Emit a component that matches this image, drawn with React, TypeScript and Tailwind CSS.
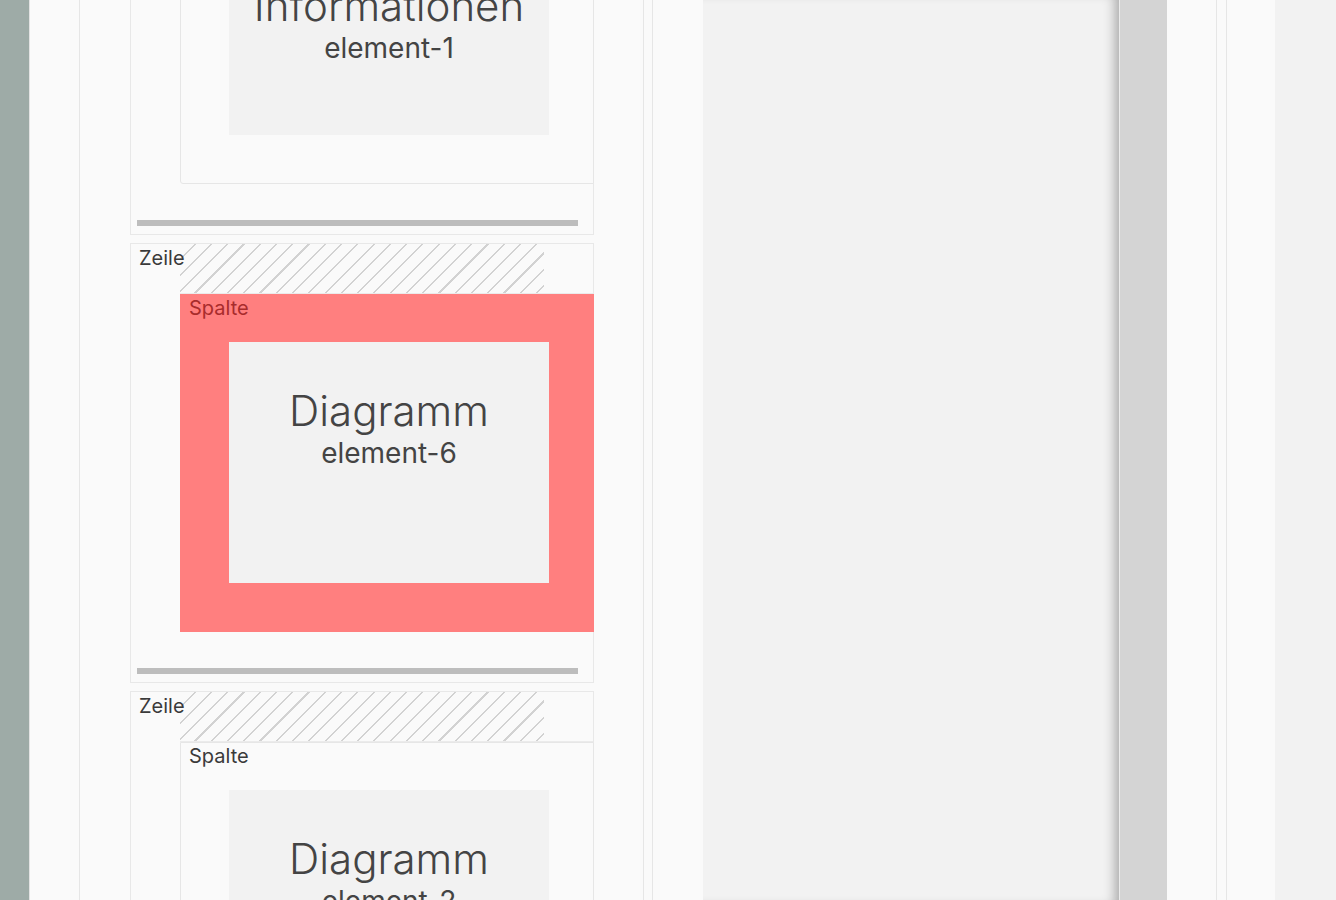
import React from 'react';

type Row = {
  title: string;
  id: string;
  active?: boolean;
  elementClass: string;
};

const rows: Row[] = [
  { title: 'Informationen', id: 'element-1', elementClass: 'h-[198px]' },
  { title: 'Diagramm', id: 'element-6', active: true, elementClass: 'h-[241px]' },
  { title: 'Diagramm', id: 'element-2', elementClass: 'h-[241px]' },
];

const ZeileBox = ({ title, id, active, elementClass }: Row) => (
  <div className="relative w-[464px] shrink-0 border border-[#e8e8e8] bg-[#fafafa]">
    <span className="absolute left-[8px] top-[2px] z-10 text-[20px] leading-6 text-[#3a3a3a]">Zeile</span>
    <div className="ml-[49px] h-[50px] border-b border-[#ebebeb]">
      <div className="h-full w-[364px] bg-[image:repeating-linear-gradient(135deg,transparent_0px,transparent_10px,#d2d2d2_10px,#d2d2d2_11.5px)]" />
    </div>
    <div
      className={`relative ml-[49px] w-[414px] border pt-[47px] pl-[48px] pb-[48px] ${
        active ? 'border-[#ff7f7f] bg-[#ff7f7f]' : 'rounded-bl-[3px] border-[#e6e6e6] bg-[#fafafa]'
      }`}
    >
      <span
        className={`absolute left-[8px] top-[1px] text-[20px] leading-6 ${
          active ? 'text-[#a82c2c]' : 'text-[#3a3a3a]'
        }`}
      >
        Spalte
      </span>
      <div className={`w-[320px] bg-[#f2f2f2] pt-[44px] text-center text-[#444444] ${elementClass}`}>
        <div className="text-[42px] leading-[50px] font-light">{title}</div>
        <div className="text-[28px] leading-[34px]">{id}</div>
      </div>
    </div>
    <div className="mt-[36px] mb-[8px] ml-[6px] h-[6px] w-[441px] bg-[#bdbdbd]" />
  </div>
);

export default function App() {
  return (
    <div className="flex h-[900px] w-full overflow-hidden bg-[#f2f2f2] font-['Inter','Noto_Sans',sans-serif]">
      {/* left rail */}
      <div className="w-[29px] shrink-0 bg-[#9eaba7]" />

      {/* layout tree */}
      <div className="flex w-[623px] shrink-0 border-l border-[#e3e3e3] bg-[#fafafa] pl-[49px] pr-[8px]">
        <div className="h-full w-[565px] border-x border-[#e6e6e6] pl-[50px] pr-[49px]">
          <div className="-mt-[162px] flex flex-col gap-2">
            {rows.map((r) => (
              <ZeileBox key={r.id} {...r} />
            ))}
          </div>
        </div>
      </div>

      {/* page preview */}
      <div className="flex shrink-0 border-l border-[#e6e6e6] bg-[#fafafa] pl-[50px]">
        <div className="h-full w-[416px] bg-[#f2f2f2] shadow-[inset_-12px_0_12px_-8px_rgba(0,0,0,0.3)]" />
      </div>
      <div className="w-[48px] shrink-0 border-l border-[#ececec] bg-[#d4d4d4]" />

      {/* right panels */}
      <div className="w-[50px] shrink-0 border-r border-[#e6e6e6] bg-[#fafafa]" />
      <div className="w-[9px] shrink-0 bg-[#fafafa]" />
      <div className="w-[49px] shrink-0 border-l border-[#e6e6e6] bg-[#fafafa]" />
      <div className="flex-1 bg-[#f2f2f2]" />
    </div>
  );
}
